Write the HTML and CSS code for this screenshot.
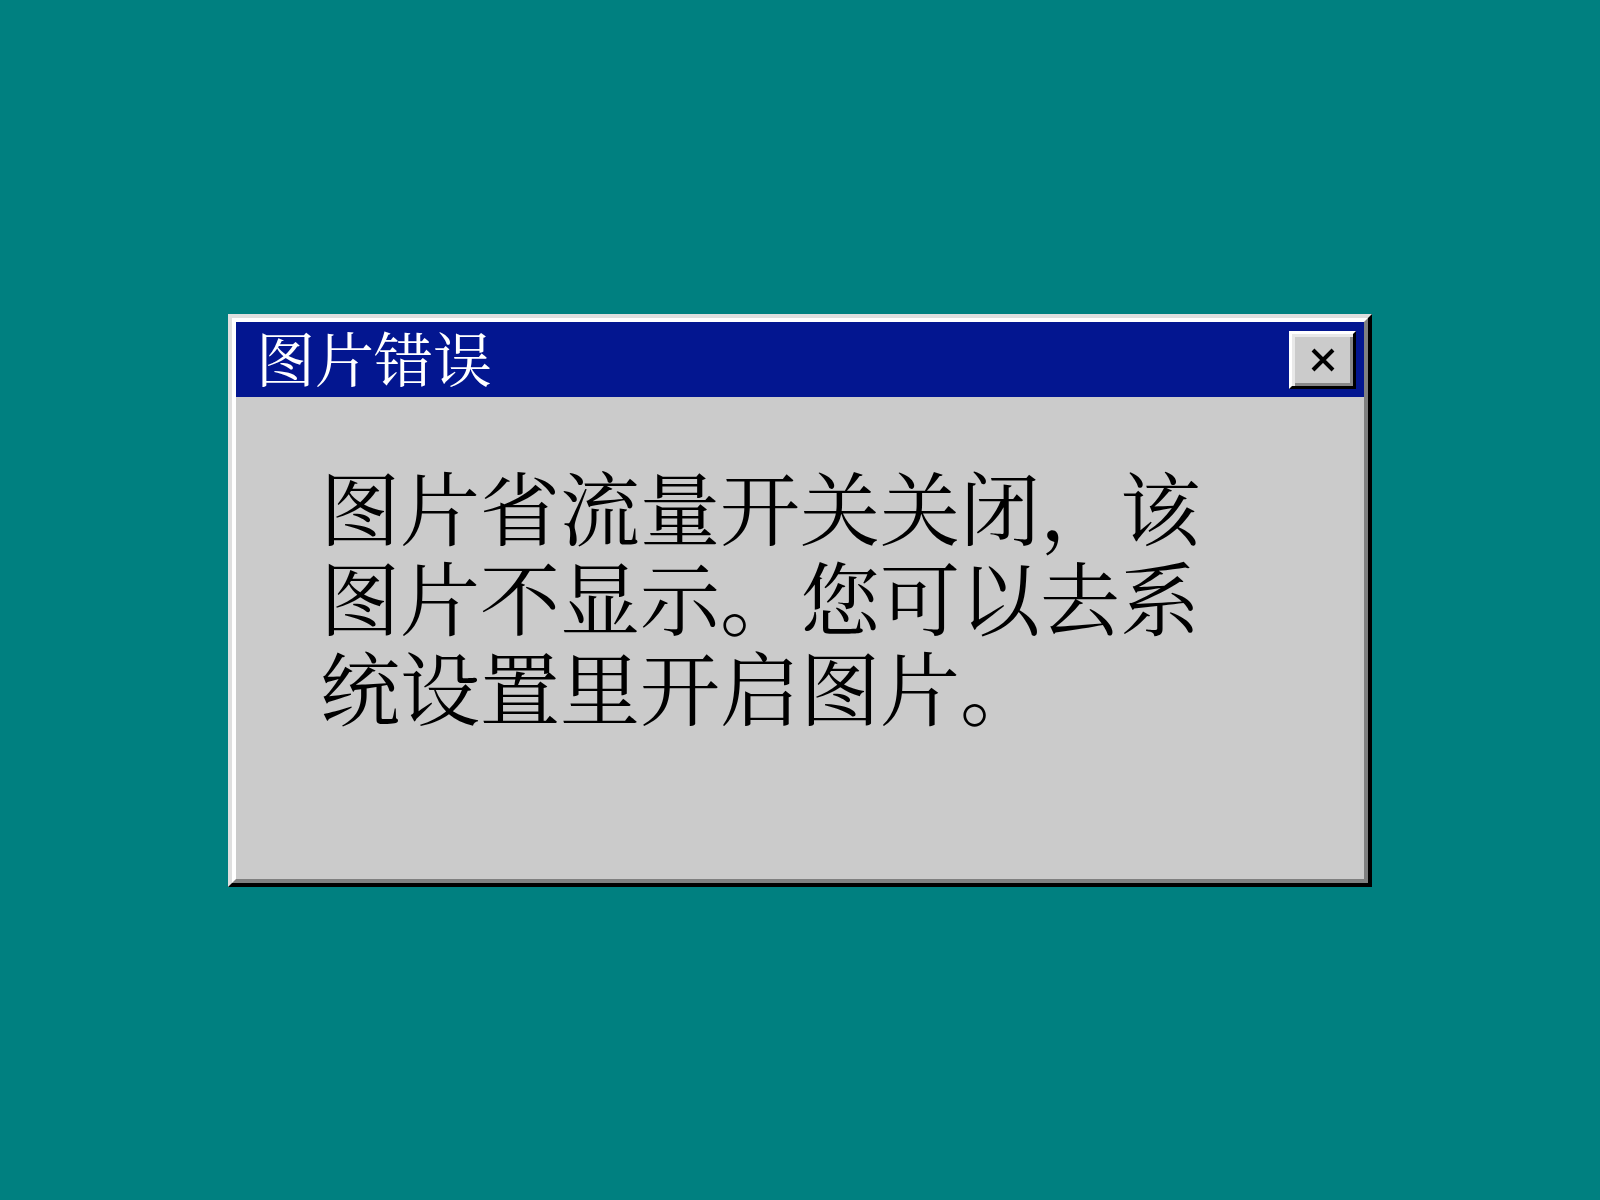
FILE: index.html
```html
<!DOCTYPE html>
<html lang="zh-CN">
<head>
<meta charset="utf-8">
<title>图片错误</title>
<link rel="stylesheet" href="styles.css">
</head>
<body>
<div class="desktop">
  <div class="window">
    <div class="window-inner">
      <div class="title-bar">
        <span class="title-text">图片错误</span>
        <button class="close-btn" aria-label="关闭">
          <svg width="26" height="24" viewBox="0 0 26 24"><path d="M3 2 L23 22 M23 2 L3 22" stroke="#000" stroke-width="4" fill="none"/></svg>
        </button>
      </div>
      <div class="window-body">
        <p class="message">图片省流量开关关闭，该图片不显示。您可以去系统设置里开启图片。</p>
      </div>
    </div>
  </div>
</div>
</body>
</html>
```
FILE: styles.css
```css
html, body {
  margin: 0;
  padding: 0;
  background: #008080;
}
.desktop {
  width: 1600px;
  height: 1200px;
  display: flex;
  align-items: center;
  justify-content: center;
}
.window {
  width: 1144px;
  height: 573px;
  box-sizing: border-box;
  border: 4px solid;
  border-color: #dfdfdf #000 #000 #dfdfdf;
  display: flex;
}
.window-inner {
  flex: 1;
  display: flex;
  flex-direction: column;
  border: 4px solid;
  border-color: #fff #808080 #808080 #fff;
  background: #cbcbcb;
}
.title-bar {
  height: 75px;
  background: #031690;
  display: flex;
  align-items: center;
  justify-content: space-between;
  padding: 0 8px 0 20px;
  box-sizing: border-box;
}
.title-text {
  color: #fff;
  font-family: "Noto Serif CJK SC", "Source Han Serif SC", "AR PL UMing CN", "AR PL SungtiL GB", "SimSun", "Songti SC", "Liberation Serif", serif;
  font-size: 59px;
  line-height: 1;
  margin-bottom: 6px;
}
.close-btn {
  width: 67px;
  height: 58px;
  box-sizing: border-box;
  padding: 0;
  margin-top: 1px;
  background: #cbcbcb;
  border: 3px solid;
  border-color: #fff #000 #000 #fff;
  box-shadow: inset 3px 3px #e8e8e8, inset -3px -3px #888;
  display: flex;
  align-items: center;
  justify-content: center;
}
.window-body {
  flex: 1;
  padding: 63px 0 0 84px;
}
.message {
  margin: 0;
  width: 920px;
  font-family: "Noto Serif CJK SC", "Source Han Serif SC", "AR PL UMing CN", "AR PL SungtiL GB", "SimSun", "Songti SC", "Liberation Serif", serif;
  font-size: 80px;
  line-height: 90px;
  color: #000;
}
```
